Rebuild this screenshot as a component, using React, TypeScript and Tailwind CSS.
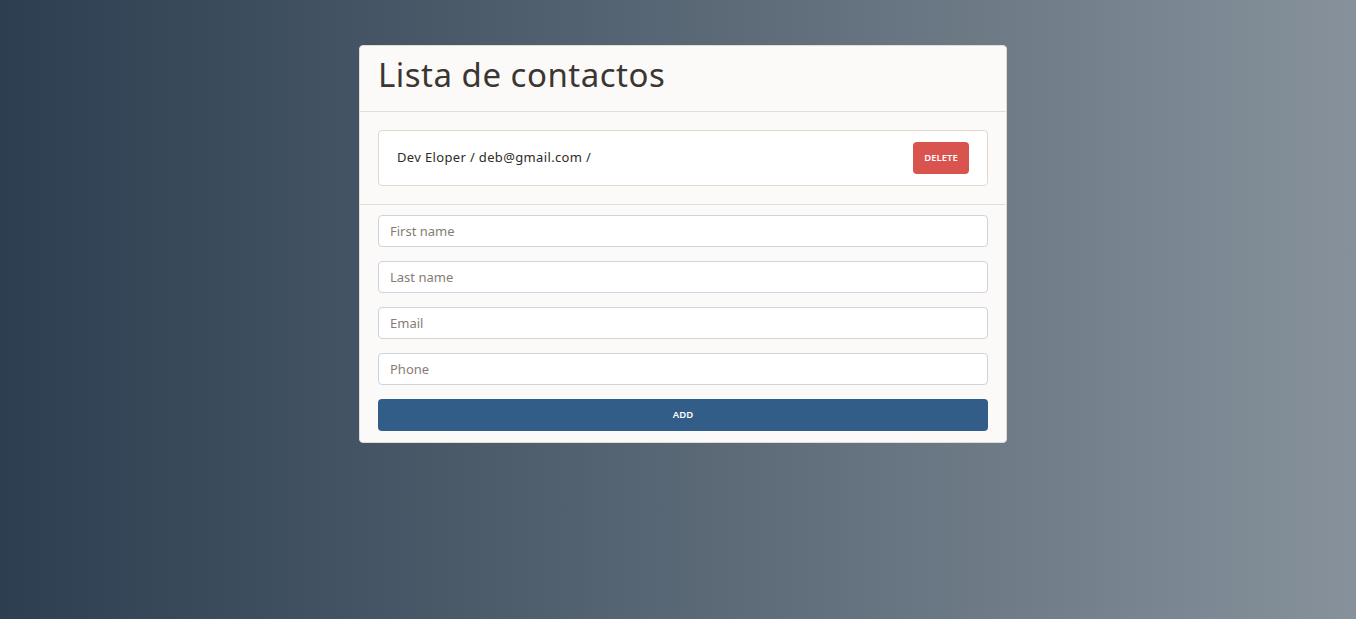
import React from "react";

export default function App() {
  const fields = ["First name", "Last name", "Email", "Phone"];
  return (
    <div
      className="min-h-[619px] w-full bg-[linear-gradient(to_right,#2c3e50,#86919b)] pl-[10px] pt-[45px] flex justify-center items-start"
      style={{ fontFamily: '"Noto Sans", "Open Sans", sans-serif' }}
    >
      <div className="w-[648px] bg-[#fcfaf8] border border-[#e3dcd3] rounded-[4px] flex flex-col">
        <div className="h-[66px] px-[18px] flex items-center border-b border-[#e6ddd2]">
          <h1 className="text-[33px] leading-none text-[#3b3632] font-normal tracking-[0.5px] -mt-[8px]">
            Lista de contactos
          </h1>
        </div>
        <div className="px-[18px] py-[18px] border-b border-[#e6ddd2]">
          <div className="h-[56px] bg-white border border-[#e2d9cd] rounded-[4px] flex items-center justify-between pl-[18px] pr-[18px]">
            <span className="text-[13px] tracking-[0.35px] text-[#2e2b28]">Dev Eloper / deb@gmail.com /</span>
            <button className="w-[56px] h-[32px] bg-[#d9534f] text-white text-[9.5px] font-semibold rounded-[4px] uppercase">
              Delete
            </button>
          </div>
        </div>
        <div className="px-[18px] pt-[10px] pb-[11px] flex flex-col gap-[14px]">
          {fields.map((f) => (
            <input
              key={f}
              placeholder={f}
              className="h-[32px] w-full bg-white border border-[#ced4da] rounded-[4px] px-[11px] text-[13px] text-[#333] placeholder:text-[#857d75] outline-none"
            />
          ))}
          <button className="h-[32px] w-full bg-[#325d88] text-white text-[9.5px] font-semibold rounded-[4px] uppercase">
            Add
          </button>
        </div>
      </div>
    </div>
  );
}
